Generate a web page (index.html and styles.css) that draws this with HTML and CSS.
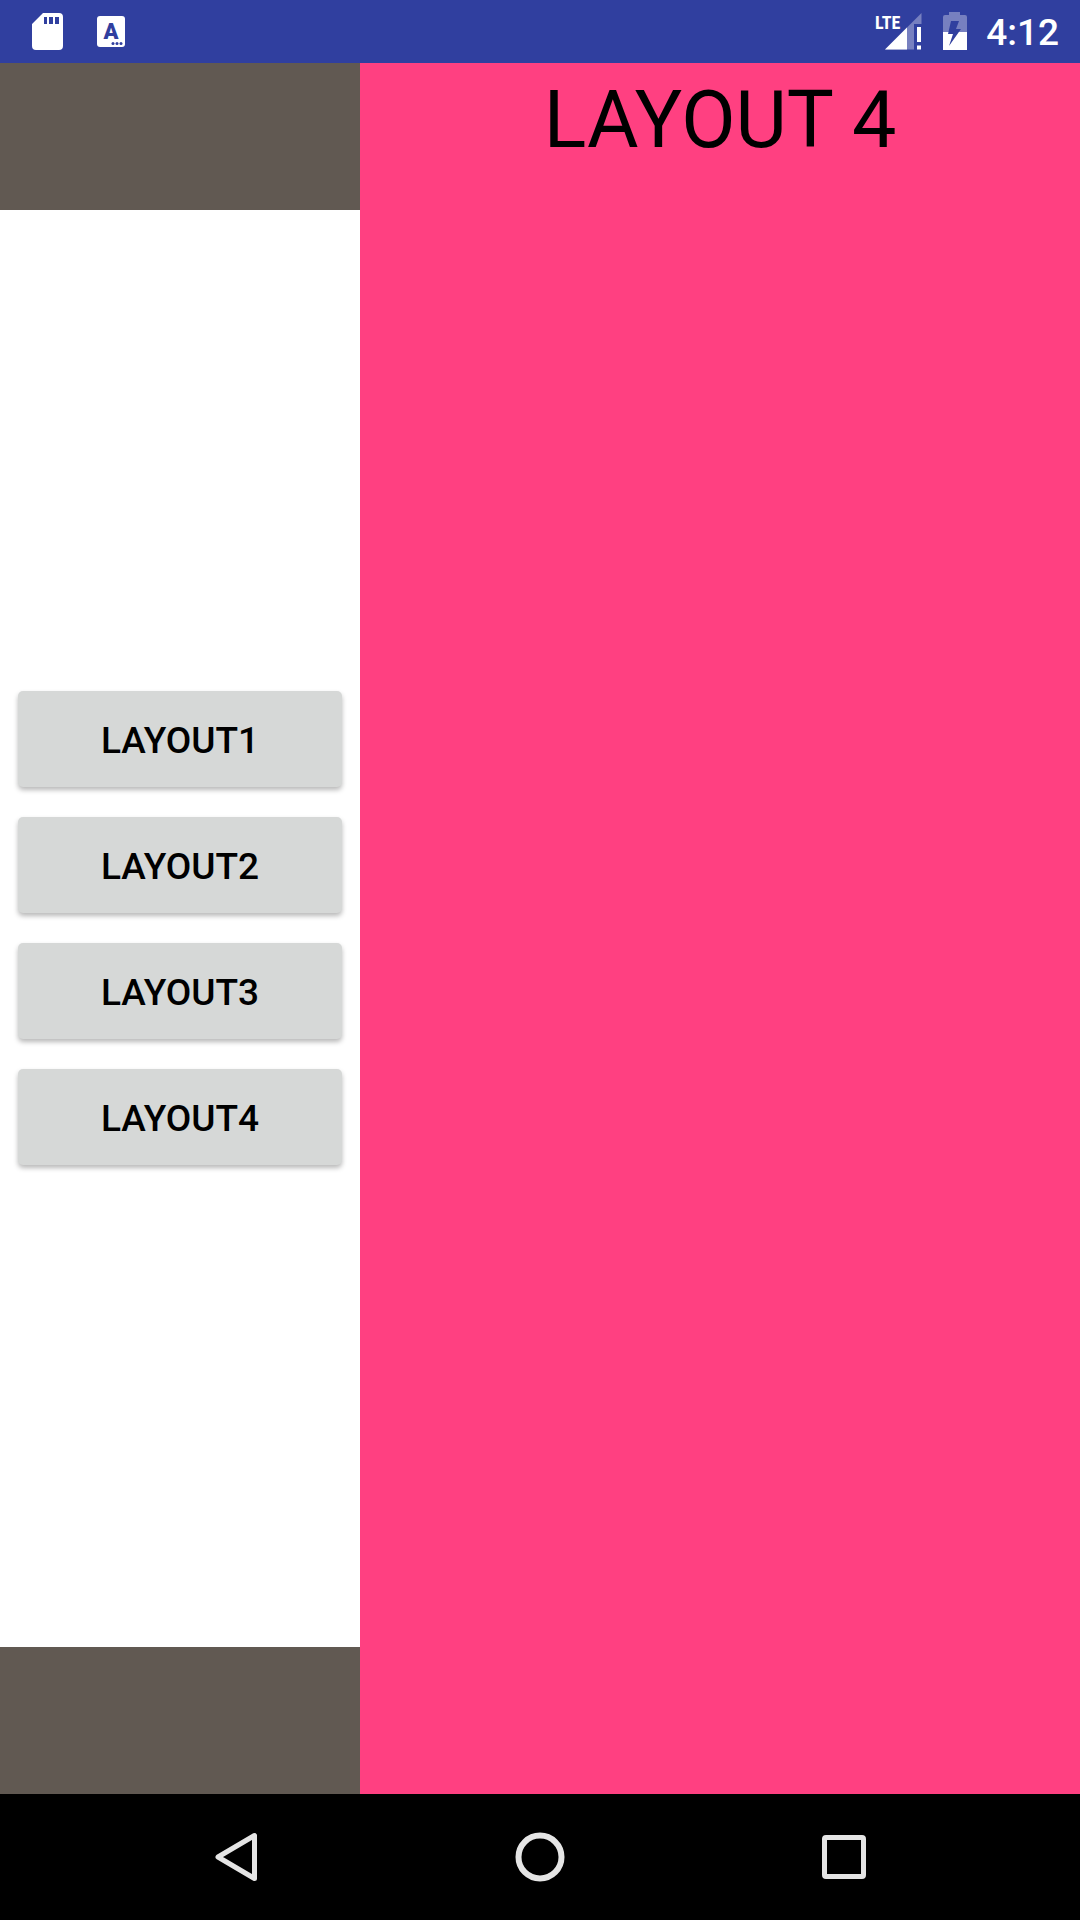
FILE: index.html
```html
<!DOCTYPE html>
<html lang="en">
<head>
<meta charset="utf-8">
<meta name="viewport" content="width=device-width, initial-scale=1">
<title>Layout 4</title>
<link rel="stylesheet" href="styles.css">
</head>
<body>
<div class="screen">
  <header class="status-bar">
    <div class="status-group notifications">
      <svg width="40" height="43" viewBox="0 0 40 43" role="img" aria-label="SD card">
        <path fill="#fff" fill-rule="evenodd" d="M15 3H31Q35 3 35 7V36Q35 40 31 40H8Q4 40 4 36V14ZM16 7V14H19V7ZM21 7V14H25V7ZM27 7V14H31V7Z"/>
      </svg>
      <svg width="40" height="43" viewBox="0 0 40 43" role="img" aria-label="Keyboard">
        <rect x="6" y="6" width="28" height="31" rx="3" fill="#fff"/>
        <text class="key-letter" x="20" y="29" text-anchor="middle">A</text>
        <g fill="#303f9f"><circle cx="22" cy="33.500" r="1.500"/><circle cx="26" cy="33.500" r="1.500"/><circle cx="30" cy="33.500" r="1.500"/></g>
      </svg>
    </div>
    <div class="status-group system">
      <svg width="50" height="43" viewBox="0 0 50 43" role="img" aria-label="LTE signal">
        <path fill="#7780c0" d="M47.500 3V14H40V39.500H11Z"/>
        <path fill="#fff" d="M33 17.500V39.500H11Z"/>
        <path fill="#fff" d="M43 17H47V32H43ZM43 35.500H47V39.500H43Z"/>
        <text class="network" x="1" y="19">LTE</text>
      </svg>
      <svg width="30" height="43" viewBox="0 0 30 43" role="img" aria-label="Battery charging">
        <path fill="#7780c0" d="M3 22V7Q3 5 5 5H9V2H20V5H25Q27 5 27 7V22Z"/>
        <path fill="#fff" d="M3 22H27V40H3Z"/>
        <path fill="#303f9f" d="M11 11H19L16 19H21L9 36L13 24H8Z"/>
      </svg>
      <time class="clock">4:12</time>
    </div>
  </header>
  <main class="content">
    <nav class="sidebar" aria-label="Layouts">
      <button class="layout-button" type="button">LAYOUT1</button>
      <button class="layout-button" type="button">LAYOUT2</button>
      <button class="layout-button" type="button">LAYOUT3</button>
      <button class="layout-button" type="button">LAYOUT4</button>
    </nav>
    <section class="panel">
      <h1 class="panel-title">LAYOUT 4</h1>
    </section>
  </main>
  <footer class="nav-bar">
    <button class="nav-button" type="button" aria-label="Back">
      <svg width="60" height="60" viewBox="0 0 60 60"><path d="M48.500 8.500V51.500L12 30Z" fill="none" stroke="#e5e5e5" stroke-width="5" stroke-linejoin="round"/></svg>
    </button>
    <button class="nav-button" type="button" aria-label="Home">
      <svg width="60" height="60" viewBox="0 0 60 60"><circle cx="30" cy="30" r="21.500" fill="none" stroke="#e5e5e5" stroke-width="6"/></svg>
    </button>
    <button class="nav-button" type="button" aria-label="Recent apps">
      <svg width="60" height="60" viewBox="0 0 60 60"><rect x="10.500" y="10.500" width="39" height="39" rx="1.500" fill="none" stroke="#e5e5e5" stroke-width="5"/></svg>
    </button>
  </footer>
</div>
</body>
</html>
```

FILE: styles.css
```css
* {
  box-sizing: border-box;
}

body {
  margin: 0;
  font-family: Roboto, "Liberation Sans", sans-serif;
  color: #000;
}

svg {
  display: block;
}

.screen {
  display: flex;
  flex-direction: column;
  min-height: 100vh;
}

.status-bar {
  display: flex;
  justify-content: space-between;
  height: 63px;
  padding: 0 21px 0 28px;
  background: #303f9f;
  color: #fff;
}

.status-group {
  display: flex;
  align-items: center;
}

.notifications {
  gap: 23px;
}

.system {
  gap: 16px;
}

.key-letter {
  font-size: 22px;
  font-weight: 900;
  fill: #303f9f;
}

.network {
  font-family: "Roboto Condensed", "Open Sans Condensed", Roboto, sans-serif;
  font-size: 18px;
  font-weight: 700;
  fill: #fff;
}

.clock {
  padding-top: 2px;
  font-size: 37px;
  font-weight: 500;
  line-height: 43px;
}

.content {
  display: grid;
  grid-template-columns: 1fr 2fr;
  flex: 1;
}

.sidebar {
  display: flex;
  flex-direction: column;
  justify-content: center;
  gap: 30px;
  padding: 0 18px 2px;
  border: solid #615952;
  border-width: 147px 0;
  background: #fff;
}

.layout-button {
  height: 96px;
  padding: 3px 0 0;
  border: 0;
  border-radius: 5px;
  background: #d6d8d7;
  box-shadow: 0 3px 5px rgba(0, 0, 0, 0.28);
  color: #000;
  font-family: inherit;
  font-size: 37px;
  font-weight: 500;
}

.panel {
  padding-top: 11px;
  background: #ff4081;
}

.panel-title {
  margin: 0;
  font-size: 79px;
  font-weight: 400;
  line-height: 93px;
  text-align: center;
}

.nav-bar {
  display: grid;
  grid-template-columns: repeat(3, 1fr);
  height: 126px;
  padding: 0 84px;
  background: #000;
}

.nav-button {
  display: grid;
  place-items: center;
  padding: 0;
  border: 0;
  background: none;
}
```
